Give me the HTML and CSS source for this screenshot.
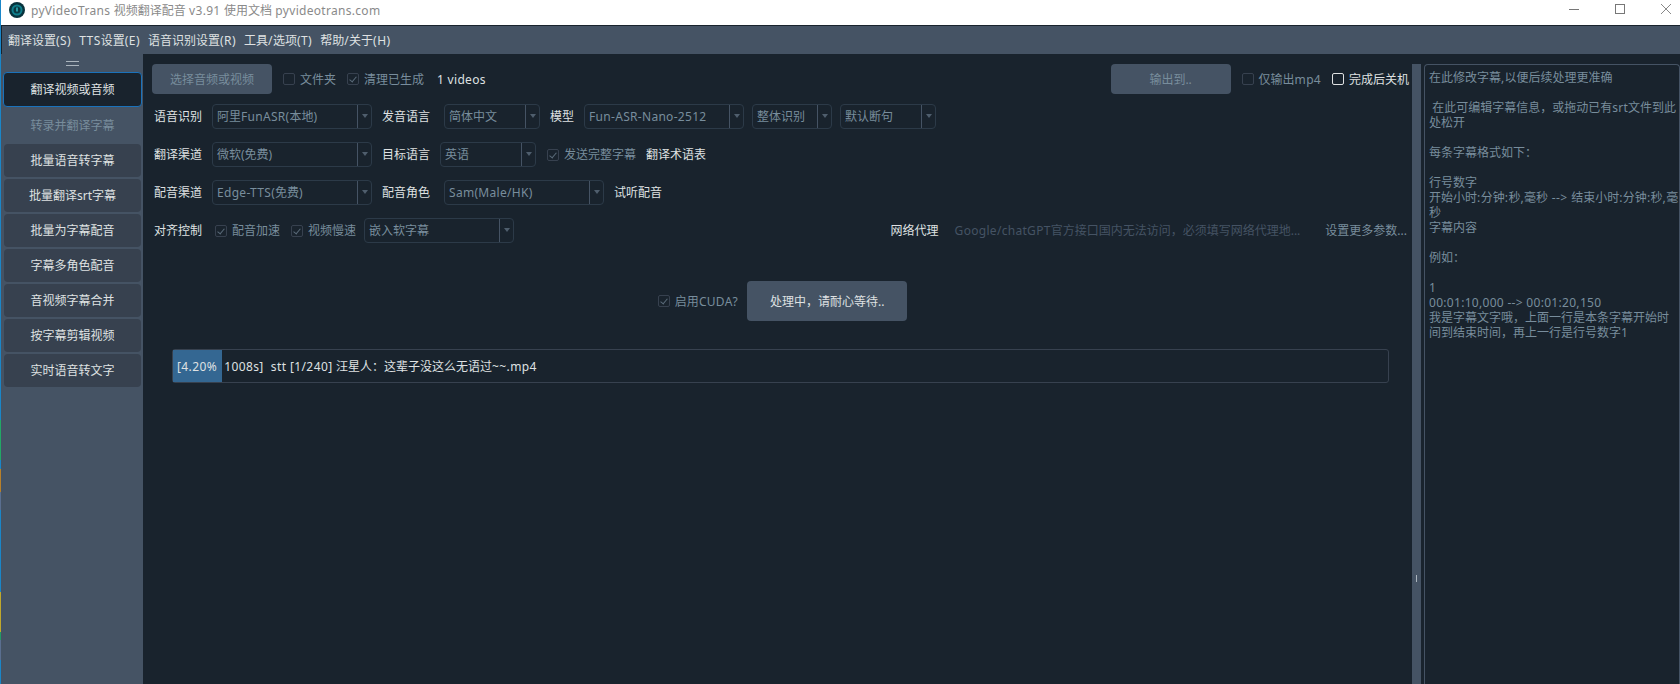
FILE: index.html
```html
<!DOCTYPE html>
<html lang="zh">
<head>
<meta charset="utf-8">
<title>pyVideoTrans</title>
<link rel="stylesheet" href="styles.css">
</head>
<body>
<div class="window">
  <div class="edge"></div>
  <div class="app">
    <header class="titlebar">
      <svg class="logo" width="18" height="18" viewBox="0 0 18 18"><circle cx="9" cy="9" r="8" fill="#07333d"/><circle cx="9" cy="9" r="5.5" fill="#0f7f8c"/><circle cx="9" cy="9" r="3.5" fill="#0a3a44"/><path d="M9 6.5v4" stroke="#33c3cc" stroke-width="1.4" fill="none"/></svg>
      <span class="title"><b class="lat">pyVideoTrans </b>视频翻译配音<b class="lat"> v3.91 </b>使用文档<b class="lat"> pyvideotrans.com</b></span>
      <div class="winctl">
        <svg width="12" height="12" viewBox="0 0 12 12"><path d="M1 6.5h10" stroke="#777" fill="none"/></svg>
        <svg width="12" height="12" viewBox="0 0 12 12"><rect x="1.5" y="1.5" width="9" height="9" fill="none" stroke="#777"/></svg>
        <svg width="12" height="12" viewBox="0 0 12 12"><path d="M1 1l10 10M11 1L1 11" stroke="#888" fill="none"/></svg>
      </div>
    </header>
    <nav class="menubar">
      <span>翻译设置<b class="lat">(S)</b></span><span><b class="lat">TTS</b>设置<b class="lat">(E)</b></span><span>语音识别设置<b class="lat">(R)</b></span><span>工具<b class="lat">/</b>选项<b class="lat">(T)</b></span><span>帮助<b class="lat">/</b>关于<b class="lat">(H)</b></span>
    </nav>
    <div class="body">
      <aside class="sidebar">
        <div class="handle"></div>
        <div class="navbtn active">翻译视频或音频</div>
        <div class="navbtn off">转录并翻译字幕</div>
        <div class="navbtn">批量语音转字幕</div>
        <div class="navbtn">批量翻译srt字幕</div>
        <div class="navbtn">批量为字幕配音</div>
        <div class="navbtn">字幕多角色配音</div>
        <div class="navbtn">音视频字幕合并</div>
        <div class="navbtn">按字幕剪辑视频</div>
        <div class="navbtn">实时语音转文字</div>
      </aside>
      <main class="main">
        <div class="row row-top">
          <div class="btn w120">选择音频或视频</div>
          <label class="check off ml11"><i class="box"></i>文件夹</label>
          <label class="check off ml11"><i class="box on"></i>清理已生成</label>
          <span class="lbl ml13"><b class="lat">1 videos</b></span>
          <div class="btn w120 push">输出到..</div>
          <label class="check off ml11"><i class="box"></i><span>仅输出<b class="lat">mp4</b></span></label>
          <label class="check ml11"><i class="box light"></i>完成后关机</label>
        </div>
        <div class="row">
          <span class="lbl first">语音识别</span>
          <div class="sel w160 ml10"><span>阿里<b class="lat">FunASR(</b>本地<b class="lat">)</b></span></div>
          <span class="lbl ml10">发音语言</span>
          <div class="sel w96 ml14"><span>简体中文</span></div>
          <span class="lbl ml10">模型</span>
          <div class="sel w160 ml10"><span><b class="lat">Fun-ASR-Nano-2512</b></span></div>
          <div class="sel w80 ml8"><span>整体识别</span></div>
          <div class="sel w96 ml8"><span>默认断句</span></div>
        </div>
        <div class="row">
          <span class="lbl first">翻译渠道</span>
          <div class="sel w160 ml10"><span>微软(免费)</span></div>
          <span class="lbl ml10">目标语言</span>
          <div class="sel w96 ml10"><span>英语</span></div>
          <label class="check off ml11"><i class="box on"></i>发送完整字幕</label>
          <span class="lbl ml10">翻译术语表</span>
        </div>
        <div class="row">
          <span class="lbl first">配音渠道</span>
          <div class="sel w160 ml10"><span><b class="lat">Edge-TTS(</b>免费<b class="lat">)</b></span></div>
          <span class="lbl ml10">配音角色</span>
          <div class="sel w160 ml14"><span><b class="lat">Sam(Male/HK)</b></span></div>
          <span class="lbl ml10">试听配音</span>
        </div>
        <div class="row">
          <span class="lbl first">对齐控制</span>
          <label class="check off ml13"><i class="box on"></i>配音加速</label>
          <label class="check off ml11"><i class="box on"></i>视频慢速</label>
          <div class="sel w150 ml8"><span>嵌入软字幕</span></div>
          <span class="lbl push">网络代理</span>
          <span class="hint"><b class="lat">Google/chatGPT</b>官方接口国内无法访问，必须填写网络代理地...</span>
          <span class="more">设置更多参数...</span>
        </div>
        <div class="row-start">
          <label class="check off"><i class="box on"></i><span>启用<b class="lat">CUDA?</b></span></label>
          <div class="btn start">处理中，请耐心等待..</div>
        </div>
        <div class="progress">
          <div class="chunk" style="width:49px"></div>
          <div class="ptext"><b class="lat">[4.20%&nbsp; 1008s]&nbsp; stt [1/240] </b>汪星人：这辈子没这么无语过<b class="lat">~~.mp4</b></div>
        </div>
      </main>
      <div class="splitter"><i></i></div>
      <div class="editor">在此修改字幕<b class="lat">,</b>以便后续处理更准确

 在此可编辑字幕信息，或拖动已有<b class="lat">srt</b>文件到此处松开

每条字幕格式如下：

行号数字
开始小时<b class="wide">:</b>分钟<b class="wide">:</b>秒<b class="wide">,</b>毫秒<b class="wide"> --&gt; </b>结束小时<b class="wide">:</b>分钟<b class="wide">:</b>秒<b class="wide">,</b>毫秒
字幕内容

例如：

1
<b class="lat">00:01:10,000 --&gt; 00:01:20,150</b>
我是字幕文字哦，上面一行是本条字幕开始时间到结束时间，再上一行是行号数字1</div>
    </div>
  </div>
</div>
</body>
</html>
```
FILE: styles.css
```css
* { box-sizing: border-box; }
html, body { margin: 0; height: 100%; overflow: hidden; }
body { font: 12px/15px "Noto Sans", "Noto Sans CJK SC", sans-serif; color: #dfe1e2; background: #19232d; }
b { font-weight: 400; }
.lat { letter-spacing: .3px; }
.wide { letter-spacing: .45px; }
.window { display: flex; height: 684px; width: 1680px; }
.edge { width: 1px; flex: none; background: linear-gradient(#1a86c8 0 420px, #22a866 420px 460px, #1a86c8 460px 469px, #b8802a 469px 492px, #5a6f90 492px 510px, #1a86c8 510px 592px, #c0a82c 592px 632px, #229a66 632px 640px, #5a6f90 640px 660px, #1a86c8 660px); }
.app { flex: 1; min-width: 0; display: flex; flex-direction: column; }

.titlebar { height: 26px; flex: none; background: #fff; border-bottom: 1px solid #19232d; display: flex; align-items: flex-start; padding-top: 2px; }
.logo { margin: -1px 0 0 7px; flex: none; }
.title { margin: 1px 0 0 5px; color: #8a8a8a; }
.winctl { margin: 1px 8px 0 auto; display: flex; gap: 34px; }
.winctl svg { display: block; }

.menubar { height: 28px; flex: none; background: #455364; display: flex; align-items: center; padding-left: 6px; gap: 8px; border-left: 1px solid #19232d; }
.menubar .lat { letter-spacing: .45px; }

.body { flex: 1; min-height: 0; display: flex; }

.sidebar { width: 142px; flex: none; background: #455364; padding: 7px 1px 0 2px; display: flex; flex-direction: column; gap: 2px; }
.handle { width: 13px; height: 5px; margin: 0 auto 4px; border-top: 1px solid #aab4bd; border-bottom: 1px solid #aab4bd; flex: none; }
.navbtn { height: 33px; flex: none; margin: 0 1px; background: #37414f; border-radius: 4px; display: flex; align-items: center; justify-content: center; }
.navbtn.active { height: 35px; margin: 0; background: #19232d; border: 1px solid #1a72bb; }
.navbtn.off { background: transparent; color: #788d9c; }

.main { flex: 1; min-width: 0; padding: 10px 5px 0 9px; }
.row { display: flex; align-items: center; height: 25px; margin-bottom: 13px; white-space: nowrap; }
.row-top { height: 30px; margin: 0 -2px 10px 0; }
.first { margin-left: 2px; }
.lbl { color: #dfe1e2; }
.push { margin-left: auto; }

.btn { height: 30px; border-radius: 4px; background: #455364; color: #788d9c; display: flex; align-items: center; justify-content: center; flex: none; }
.w120 { width: 120px; }

.ml8 { margin-left: 8px; }
.ml10 { margin-left: 10px; }
.ml11 { margin-left: 11px; }
.ml13 { margin-left: 13px; }
.ml14 { margin-left: 14px; }

.check { display: flex; align-items: center; gap: 5px; }
.check.off { color: #788d9c; }
.box { width: 12px; height: 12px; border: 1px solid #37414f; border-radius: 2px; flex: none; position: relative; display: block; }
.box.light { border-color: #dfe1e2; }
.box.on::after { content: ""; position: absolute; left: 3px; top: 1px; width: 3px; height: 6px; border: solid #5a6b79; border-width: 0 1.5px 1.5px 0; transform: rotate(40deg); }

.sel { height: 25px; flex: none; border: 1px solid #2c3a48; border-radius: 4px; color: #788d9c; padding-left: 4px; display: flex; align-items: center; position: relative; }
.sel::before { content: ""; position: absolute; right: 13px; top: 0; bottom: 0; width: 1px; background: #455364; }
.sel::after { content: ""; position: absolute; right: 3px; top: 9px; border: 3px solid transparent; border-top: 4px solid #4f5e6d; border-bottom: 0; }
.w160 { width: 160px; }
.w150 { width: 150px; }
.w96 { width: 96px; }
.w80 { width: 80px; }

.hint { margin-left: 16px; color: #455364; }
.more { margin-left: 25px; color: #788d9c; }

.row-start { display: flex; align-items: center; justify-content: center; margin-top: 38px; padding-left: 6px; gap: 9px; }
.start { width: 160px; height: 40px; color: #dfe1e2; }

.progress { position: relative; height: 34px; margin: 28px 18px 0 20px; border: 1px solid #37414f; border-radius: 3px; white-space: nowrap; }
.chunk { height: 100%; background: #346792; }
.ptext { position: absolute; left: 4px; top: 9px; color: #dfe1e2; }
.ptext .lat { letter-spacing: .4px; }

.splitter { width: 9px; flex: none; margin-top: 10px; background: #455364; position: relative; }
.splitter i { position: absolute; left: 4px; top: 511px; width: 1px; height: 7px; background: #aab4bd; }
.editor { width: 256px; flex: none; margin: 10px 0 0 3px; padding: 5px 0 0 4px; border: 1px solid #455364; border-bottom: 0; border-radius: 4px 4px 0 0; color: #788d9c; white-space: pre-wrap; word-break: break-all; overflow: hidden; }
```
